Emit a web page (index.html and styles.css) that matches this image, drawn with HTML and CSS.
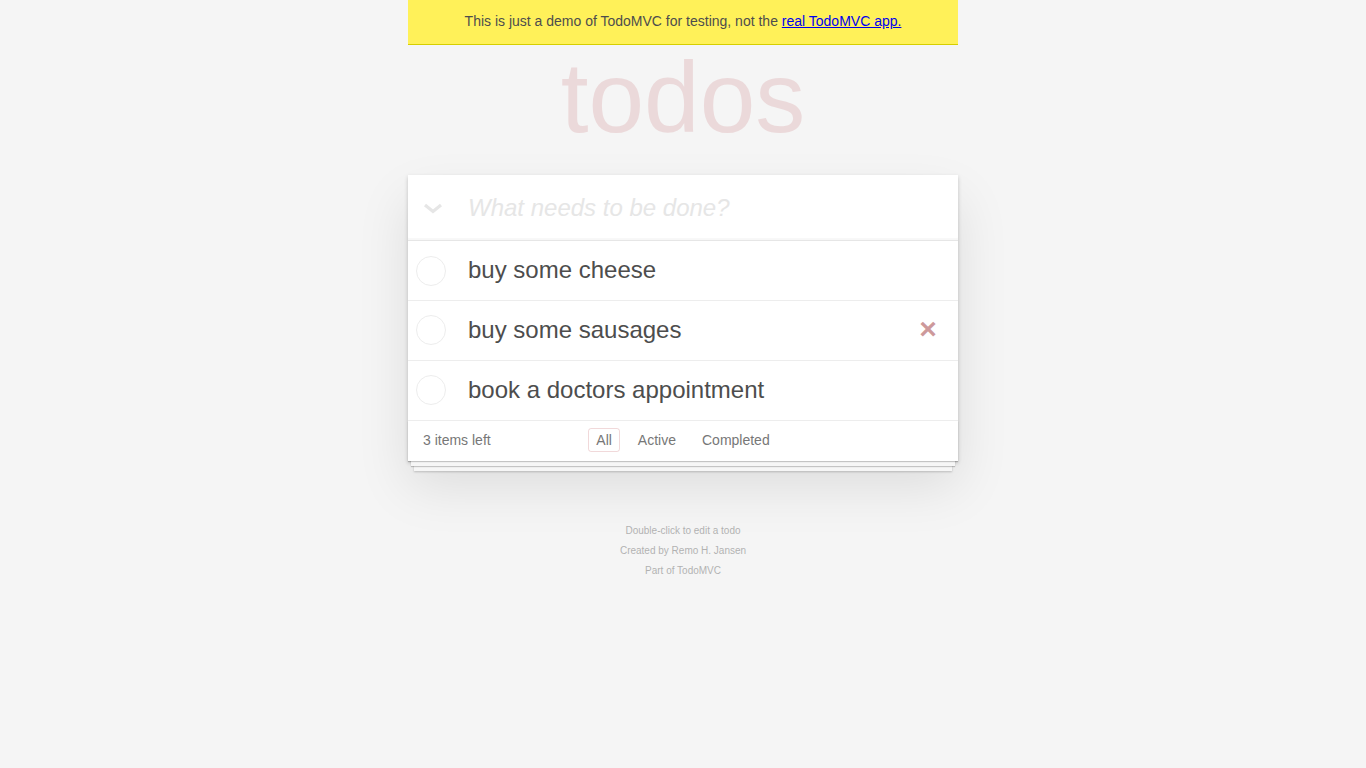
FILE: index.html
```html
<!DOCTYPE html>
<html lang="en">
<head>
  <meta charset="UTF-8">
  <title>TodoMVC</title>
  <link rel="stylesheet" href="styles.css">
</head>
<body>

<div class="page">
  <div class="banner">
    This is just a demo of TodoMVC for testing, not the <a href="#">real TodoMVC app.</a>
  </div>

  <h1 class="logo">todos</h1>

  <section class="todoapp">
    <header class="new-row">
      <span class="toggle-all">
        <svg width="20" height="12" viewBox="0 0 20 12">
          <path d="M2 2 L10 8.5 L18 2" fill="none" stroke="#e6e6e6" stroke-width="3.2"/>
        </svg>
      </span>
      <input class="new-todo" type="text" placeholder="What needs to be done?">
    </header>

    <ul class="todo-list">
      <li class="todo">
        <span class="check"></span>
        <label class="todo-label">buy some cheese</label>
      </li>
      <li class="todo">
        <span class="check"></span>
        <label class="todo-label">buy some sausages</label>
        <button class="destroy">×</button>
      </li>
      <li class="todo">
        <span class="check"></span>
        <label class="todo-label">book a doctors appointment</label>
      </li>
    </ul>

    <footer class="footer">
      <span class="count">3 items left</span>
      <ul class="filters">
        <li><a class="selected" href="#">All</a></li>
        <li><a href="#">Active</a></li>
        <li><a href="#">Completed</a></li>
      </ul>
      <span></span>
    </footer>
  </section>

  <footer class="info">
    <p>Double-click to edit a todo</p>
    <p>Created by <a href="#">Remo H. Jansen</a></p>
    <p>Part of <a href="#">TodoMVC</a></p>
  </footer>
</div>

</body>
</html>
```

FILE: styles.css
```css
* {
  box-sizing: border-box;
}
body {
  margin: 0;
  background: #f5f5f5;
  color: #111;
  font-family: "Liberation Sans", Arial, sans-serif;
  font-size: 14px;
  line-height: 20px;
}
ul {
  list-style: none;
  margin: 0;
  padding: 0;
}
.page {
  width: 550px;
  margin: 0 auto;
}
.banner {
  height: 45px;
  padding-top: 11px;
  background: #fff159;
  border-bottom: 1px solid #d6cf00;
  color: #4d4d4d;
  text-align: center;
}
.banner a {
  color: #00e;
  text-decoration: underline;
}
.logo {
  height: 130px;
  margin: 0;
  color: #b83f45;
  opacity: 0.15;
  font-size: 100px;
  font-weight: 400;
  line-height: 105px;
  text-align: center;
}
.todoapp {
  position: relative;
  background: #fff;
  box-shadow: 0 2px 4px 0 rgba(0, 0, 0, 0.2), 0 25px 50px 0 rgba(0, 0, 0, 0.1);
}
.new-row {
  display: flex;
  align-items: center;
  height: 65px;
  box-shadow: inset 0 -2px 1px rgba(0, 0, 0, 0.03);
}
.toggle-all {
  display: flex;
  justify-content: center;
  width: 60px;
  padding-right: 10px;
  padding-top: 2px;
}
.new-todo {
  flex: 1;
  height: 65px;
  padding: 0 16px 0 0;
  border: none;
  outline: none;
  background: transparent;
  color: #4d4d4d;
  font-family: inherit;
  font-size: 24px;
}
.new-todo::placeholder {
  color: #e6e6e6;
  font-style: italic;
  font-weight: 400;
}
.todo-list {
  border-top: 1px solid #e6e6e6;
}
.todo {
  display: flex;
  align-items: center;
  height: 60px;
  border-bottom: 1px solid #ededed;
  font-size: 24px;
}
.check {
  width: 30px;
  height: 30px;
  margin-left: 8px;
  margin-right: 22px;
  border: 1px solid #ededed;
  border-radius: 50%;
}
.todo + .todo .check {
  margin-bottom: 2px;
}
.todo-label {
  flex: 1;
  padding-bottom: 2px;
  color: #4d4d4d;
  line-height: 29px;
}
.destroy {
  width: 40px;
  height: 40px;
  margin-right: 10px;
  padding: 0 0 5px;
  border: none;
  background: none;
  color: #af5b5e;
  opacity: 0.62;
  font-family: inherit;
  font-size: 30px;
  font-weight: 700;
  line-height: 35px;
}
.footer {
  position: relative;
  display: grid;
  grid-template-columns: 1fr auto 1fr;
  align-items: center;
  height: 40px;
  padding: 0 15px 2px;
  color: #777;
}
.footer::before {
  content: "";
  position: absolute;
  right: 0;
  bottom: 0;
  left: 0;
  height: 40px;
  overflow: hidden;
  pointer-events: none;
  box-shadow: 0 1px 1px rgba(0, 0, 0, 0.2), 0 8px 0 -3px #f6f6f6, 0 9px 1px -3px rgba(0, 0, 0, 0.2), 0 16px 0 -6px #f6f6f6, 0 17px 2px -6px rgba(0, 0, 0, 0.2);
}
.count {
  text-align: left;
}
.filters {
  position: relative;
  display: flex;
}
.filters a {
  display: block;
  margin: 5px;
  padding: 1px 7px;
  border: 1px solid transparent;
  border-radius: 3px;
  color: inherit;
  text-decoration: none;
}
.filters a.selected {
  border-color: rgba(184, 63, 69, 0.2);
}
.info {
  margin-top: 60px;
  color: #4d4d4d;
  opacity: 0.4;
  font-size: 10px;
  text-align: center;
}
.info p {
  margin: 0;
  line-height: 20px;
}
.info a {
  color: inherit;
  text-decoration: none;
}
```
